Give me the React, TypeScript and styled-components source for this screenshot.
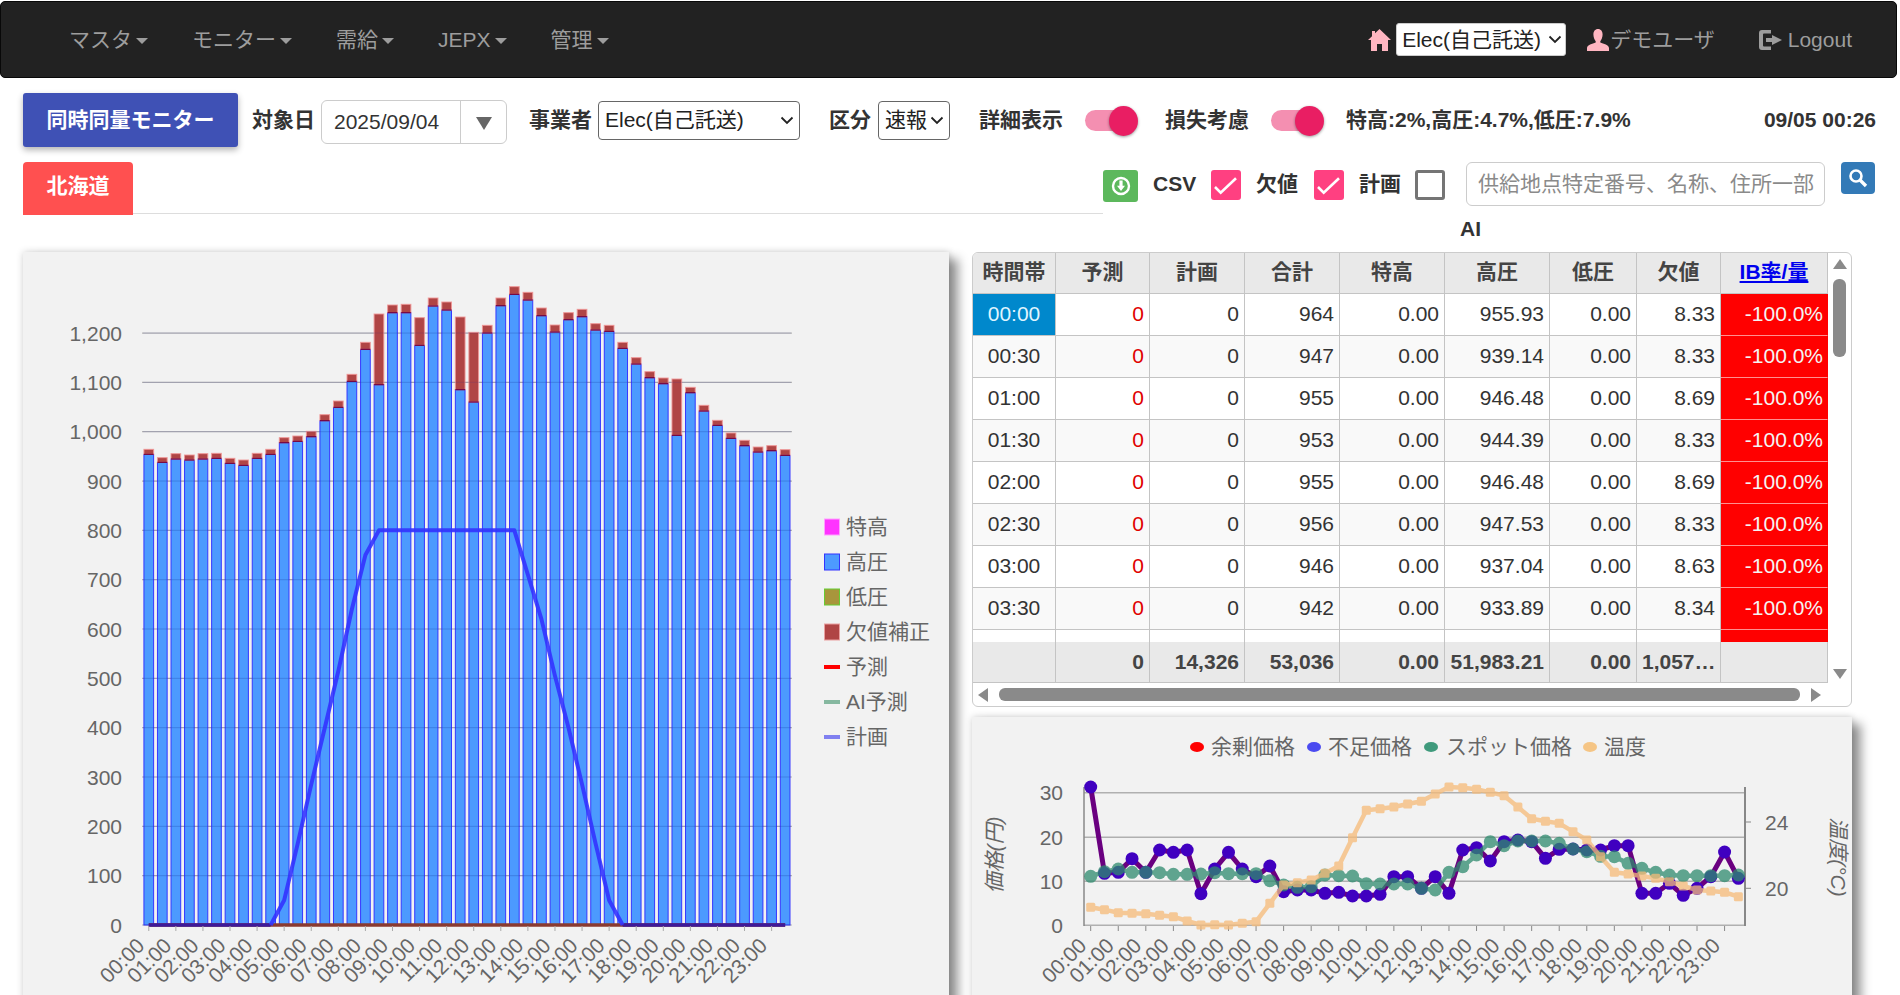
import styled, { createGlobalStyle } from 'styled-components';

const FONT = '"Liberation Sans", "Noto Sans CJK JP", sans-serif';

// bar tops traced from the day's data: [total top, 高圧 top], y px on a 3x grid from 240
const BARS: [number, number][] = [
  [628, 643], [653, 667], [641, 657], [645, 660], [641, 657], [640, 655], [655, 670], [660, 676],
  [640, 655], [628, 643], [593, 608], [588, 604], [574, 590], [524, 542], [483, 502], [403, 424],
  [307, 328], [222, 434], [195, 218], [193, 218], [233, 316], [174, 198], [186, 210], [231, 449],
  [277, 486], [256, 279], [174, 197], [140, 163], [157, 180], [204, 227], [255, 276], [218, 239],
  [208, 230], [251, 270], [256, 274], [307, 325], [353, 372], [395, 413], [414, 431], [417, 586],
  [442, 458], [496, 513], [541, 556], [579, 595], [601, 617], [621, 636], [617, 632], [629, 646],
];
const PLAN = [
  0, 0, 0, 0, 0, 0, 0, 0, 0, 0, 50, 165, 285, 400, 515, 640, 750, 800, 800, 800, 800, 800, 800, 800,
  800, 800, 800, 800, 710, 620, 505, 400, 285, 165, 50, 0, 0, 0, 0, 0, 0, 0, 0, 0, 0, 0, 0, 0,
];
const SURPLUS = [
  216, 475, 472, 431, 472, 405, 412, 405, 536, 462, 412, 462, 485, 453, 530, 525, 525, 535, 532, 543, 543, 538, 485, 485,
  520, 485, 535, 405, 398, 438, 380, 375, 380, 430, 403, 402, 405, 405, 392, 392, 535, 535, 505, 541, 520, 485, 411, 490,
];
const SPOT = [
  484, 470, 462, 472, 472, 473, 478, 478, 477, 473, 476, 476, 476, 497, 510, 517, 515, 480, 482, 483, 506, 507, 507, 507,
  520, 525, 472, 455, 420, 380, 392, 378, 378, 378, 385, 402, 410, 424, 425, 445, 460, 472, 480, 482, 482, 482, 482, 480,
];
const TEMP = [
  577, 584, 593, 595, 596, 601, 605, 618, 630, 629, 630, 625, 620, 565, 510, 503, 495, 475, 453, 368, 286, 281, 276, 267,
  259, 237, 216, 218, 223, 232, 242, 276, 311, 319, 325, 350, 375, 425, 472, 477, 483, 490, 500, 513, 525, 528, 532, 545,
];
const HOURS = Array.from({ length: 24 }, (_, h) => `${String(h).padStart(2, '0')}:00`);

const ROWS = [
  ['00:00', '0', '0', '964', '0.00', '955.93', '0.00', '8.33', '-100.0%'],
  ['00:30', '0', '0', '947', '0.00', '939.14', '0.00', '8.33', '-100.0%'],
  ['01:00', '0', '0', '955', '0.00', '946.48', '0.00', '8.69', '-100.0%'],
  ['01:30', '0', '0', '953', '0.00', '944.39', '0.00', '8.33', '-100.0%'],
  ['02:00', '0', '0', '955', '0.00', '946.48', '0.00', '8.69', '-100.0%'],
  ['02:30', '0', '0', '956', '0.00', '947.53', '0.00', '8.33', '-100.0%'],
  ['03:00', '0', '0', '946', '0.00', '937.04', '0.00', '8.63', '-100.0%'],
  ['03:30', '0', '0', '942', '0.00', '933.89', '0.00', '8.34', '-100.0%'],
  ['', '', '', '', '', '', '', '', ''],
];
const HEAD = ['時間帯', '予測', '計画', '合計', '特高', '高圧', '低圧', '欠値'];
const FOOT = ['', '0', '14,326', '53,036', '0.00', '51,983.21', '0.00', '1,057…', ''];

const barX = (i: number) => 142 + 13.54 * (i + 0.5);
const powerY = (v: number) => 925 - v * 0.4933;
const priceX = (i: number) => 1090.7 + 13.78 * i;
const priceY = (z: number) => 715 + z / 3;
const points = (ys: number[], x: (i: number) => number, y: (v: number) => number) =>
  ys.map((v, i) => `${x(i)},${y(v)}`).join(' ');

const CHEVRON = `url("data:image/svg+xml,%3Csvg xmlns='http://www.w3.org/2000/svg' width='14' height='9' viewBox='0 0 14 9'%3E%3Cpath d='M1.500 1.500 7 7l5.500-5.500' fill='none' stroke='%23222' stroke-width='1.800'/%3E%3C/svg%3E")`;

const GlobalStyle = createGlobalStyle`
  html, body {
    margin: 0;
    height: 995px;
    overflow: hidden;
    background: #fff;
    font-family: ${FONT};
    font-size: 21px;
    line-height: 24px;
    color: #333;
  }
  * { box-sizing: border-box; }
`;

const Page = styled.div`
  width: 1897px;
  padding-top: 1px;
`;

const Navbar = styled.nav`
  display: flex;
  align-items: center;
  height: 77px;
  padding: 0 44px 0 68px;
  background: #222;
  border: 1px solid #080808;
  border-radius: 5px;
`;
const NavMenu = styled.div`
  display: flex;
  gap: 44px;
`;
const NavItem = styled.a`
  display: flex;
  align-items: center;
  gap: 4px;
  color: #9d9d9d;
  &::after {
    content: '';
    border-top: 6px solid #9d9d9d;
    border-left: 6px solid transparent;
    border-right: 6px solid transparent;
    margin-top: 2px;
  }
`;
const NavRight = styled.div`
  display: flex;
  align-items: center;
  margin-left: auto;
`;
const NativeSelect = styled.select`
  appearance: none;
  background: #fff ${CHEVRON} no-repeat;
  color: #222;
  font: 21px/24px ${FONT};
`;
const NavSelect = styled(NativeSelect)`
  width: 170px;
  height: 33px;
  margin: 0 21px 0 5px;
  padding: 0 0 0 5px;
  border: 1px solid #ccc;
  border-radius: 3px;
  background-position: right 3px center;
`;
const NavLink = styled.a<{ $ml?: number }>`
  display: flex;
  align-items: center;
  gap: 1px;
  margin-left: ${(p) => p.$ml ?? 0}px;
  color: #9d9d9d;
`;
const LogoutLink = styled(NavLink)`
  gap: 5px;
`;

const Toolbar = styled.div`
  display: flex;
  align-items: center;
  height: 54px;
  margin-top: 15px;
  padding: 0 21px 0 23px;
`;
const MonitorButton = styled.button`
  width: 215px;
  height: 54px;
  padding: 0;
  border: 0;
  border-radius: 3px;
  background: #3f51b5;
  color: #fff;
  font: bold 21px/24px ${FONT};
  box-shadow: 0 3px 6px rgba(0, 0, 0, 0.3);
`;
const Field = styled.div<{ $ml: number; $gap?: number }>`
  display: flex;
  align-items: center;
  gap: ${(p) => p.$gap ?? 6}px;
  margin-left: ${(p) => p.$ml}px;
`;
const Label = styled.span`
  font-weight: bold;
  color: #333;
  white-space: nowrap;
`;
const DateBox = styled.div`
  display: flex;
  align-items: center;
  width: 186px;
  height: 44px;
  margin-top: 4px;
  border: 1px solid #ccc;
  border-radius: 6px;
  background: #fff;
`;
const DateInput = styled.input`
  width: 139px;
  height: 100%;
  padding: 0 0 0 12px;
  border: 0;
  border-right: 1px solid #ccc;
  background: transparent;
  color: #333;
  font: 21px/24px ${FONT};
`;
const DateArrow = styled.span`
  margin: 3px auto 0;
  border-top: 13px solid #666;
  border-left: 8px solid transparent;
  border-right: 8px solid transparent;
`;
const Select = styled(NativeSelect)<{ $w: number }>`
  width: ${(p) => p.$w}px;
  height: 39px;
  padding: 0 0 0 6px;
  border: 1px solid #666;
  border-radius: 4px;
  background-position: right 5px center;
`;
const Toggle = styled.span`
  position: relative;
  display: block;
  width: 50px;
  height: 21px;
  border-radius: 11px;
  background: #f48fb1;
  &::after {
    content: '';
    position: absolute;
    left: 24px;
    top: -4px;
    width: 29px;
    height: 30px;
    border-radius: 50%;
    background: #e91e63;
    box-shadow: 0 1px 3px rgba(0, 0, 0, 0.4);
  }
`;
const Clock = styled(Label)`
  margin-left: auto;
`;

const FilterRow = styled.div`
  display: flex;
  height: 53px;
  margin-top: 15px;
  padding-left: 23px;
`;
const TabStrip = styled.div`
  width: 1080px;
  height: 52px;
  border-bottom: 1px solid #ddd;
`;
const Tab = styled.div`
  display: flex;
  align-items: center;
  justify-content: center;
  width: 110px;
  height: 53px;
  padding-bottom: 5px;
  border-radius: 4px 4px 0 0;
  background: #ff5050;
  color: #fff;
  font-weight: bold;
`;
const Tools = styled.div`
  display: flex;
  align-items: flex-start;
  gap: 15px;
`;
const CsvButton = styled.button`
  display: flex;
  align-items: center;
  justify-content: center;
  width: 35px;
  height: 32px;
  margin-top: 8px;
  padding: 0;
  border: 0;
  border-radius: 3px;
  background: #5cb85c;
`;
const ToolLabel = styled(Label)<{ $w: number }>`
  width: ${(p) => p.$w}px;
  margin-top: 7px;
  line-height: 30px;
`;
const Check = styled.span<{ $on?: boolean }>`
  display: flex;
  width: 30px;
  height: 30px;
  margin-top: 8px;
  border-radius: 3px;
  background: ${(p) => (p.$on ? '#ff4081' : '#fff')};
  border: ${(p) => (p.$on ? '0' : '3px solid #757575')};
`;
const SearchInput = styled.input`
  width: 359px;
  height: 44px;
  margin-left: 6px;
  padding: 0 8px 0 11px;
  border: 1px solid #ccc;
  border-radius: 6px;
  color: #333;
  font: 21px/24px ${FONT};
  &::placeholder {
    color: #8a8a8a;
    opacity: 1;
  }
`;
const SearchButton = styled.button`
  display: flex;
  align-items: center;
  justify-content: center;
  width: 34px;
  height: 32px;
  margin-left: 1px;
  padding: 0;
  border: 0;
  border-radius: 4px;
  background: #337ab7;
`;
const AiRow = styled(Label)`
  display: block;
  height: 37px;
  padding: 2px 0 0 1460px;
`;

const Content = styled.div`
  display: flex;
  gap: 23px;
  padding-left: 23px;
`;
const ChartPanel = styled.section<{ $w: number; $h: number }>`
  width: ${(p) => p.$w}px;
  height: ${(p) => p.$h}px;
  flex: none;
  background: #f2f2f2;
  box-shadow: 0 0 7px rgba(0, 0, 0, 0.18), 9px 7px 10px rgba(0, 0, 0, 0.42);
`;
const ChartSvg = styled.svg`
  display: block;
  font-family: ${FONT};
  font-size: 21px;
  fill: #666;
`;
const RightColumn = styled.div`
  display: flex;
  flex-direction: column;
  gap: 10px;
  width: 880px;
`;

const TableCard = styled.div`
  height: 455px;
  background: #fff;
  border: 1px solid #ccc;
  border-radius: 6px;
  overflow: hidden;
`;
const TableMain = styled.div`
  display: flex;
`;
const TableBody = styled.div`
  width: 855px;
`;
const COLUMNS = '83px 94px 95px 95px 105px 105px 87px 84px 107px';
const GridRow = styled.div<{ $h: number; $alt?: boolean; $head?: boolean }>`
  display: grid;
  grid-template-columns: ${COLUMNS};
  height: ${(p) => p.$h}px;
  background: ${(p) => (p.$head ? '#e9e9e9' : p.$alt ? '#f9f9f9' : '#fff')};
`;
const RowWindow = styled.div`
  height: 348px;
  overflow: hidden;
`;
const Cell = styled.div<{ $kind?: 'time' | 'selected' | 'red' | 'ib' }>`
  display: flex;
  align-items: center;
  justify-content: ${(p) => (p.$kind === 'time' || p.$kind === 'selected' ? 'center' : 'flex-end')};
  padding: 0 ${(p) => (p.$kind === 'ib' ? 4 : 5)}px 2px 5px;
  border-right: 1px solid #c4c4c4;
  border-bottom: 1px solid #c4c4c4;
  color: ${(p) => (p.$kind === 'red' ? '#e00000' : p.$kind === 'selected' ? '#dff4ff' : p.$kind === 'ib' ? '#f4f4f4' : '#333')};
  background: ${(p) => (p.$kind === 'selected' ? '#0088cc' : p.$kind === 'ib' ? '#ff0000' : 'transparent')};
  ${(p) => (p.$kind === 'ib' ? 'border-bottom-color: #ff9090; border-right-color: #ff0000;' : '')}
`;
const HeadCell = styled.div`
  display: flex;
  align-items: center;
  justify-content: center;
  padding-bottom: 2px;
  border-right: 1px solid #c4c4c4;
  border-bottom: 1px solid #c4c4c4;
  font-weight: bold;
  color: #444;
`;
const IbLink = styled.a`
  color: #0000ee;
  text-decoration: underline;
`;
const FootCell = styled.div`
  padding: 0 5px;
  border-right: 1px solid #c4c4c4;
  border-bottom: 1px solid #c4c4c4;
  font-weight: bold;
  line-height: 40px;
  text-align: right;
  color: #444;
  white-space: nowrap;
`;
const VScroll = styled.div`
  display: flex;
  flex-direction: column;
  align-items: center;
  width: 23px;
  padding: 6px 0 4px;
`;
const ArrowUp = styled.span`
  border-bottom: 10px solid #8a8a8a;
  border-left: 7px solid transparent;
  border-right: 7px solid transparent;
`;
const ArrowDown = styled.span`
  margin-top: auto;
  border-top: 10px solid #8a8a8a;
  border-left: 7px solid transparent;
  border-right: 7px solid transparent;
`;
const VThumb = styled.span`
  width: 13px;
  height: 78px;
  margin-top: 10px;
  border-radius: 6px;
  background: #8a8a8a;
`;
const HScroll = styled.div`
  display: flex;
  align-items: center;
  height: 23px;
  padding: 0 30px 0 5px;
`;
const ArrowLeft = styled.span`
  border-right: 10px solid #8a8a8a;
  border-top: 7px solid transparent;
  border-bottom: 7px solid transparent;
`;
const ArrowRight = styled.span`
  border-left: 10px solid #8a8a8a;
  border-top: 7px solid transparent;
  border-bottom: 7px solid transparent;
`;
const HThumb = styled.span`
  flex: 1;
  height: 13px;
  margin: 0 11px;
  border-radius: 6px;
  background: #8a8a8a;
`;

function CheckMark() {
  return (
    <svg width={30} height={30} viewBox="0 0 30 30" fill="none">
      <path d="M4 17l5.700 5.700L25 8.300" stroke="#fff" strokeWidth={2.600} />
    </svg>
  );
}

function PowerChart() {
  const ticks = [1200, 1100, 1000, 900, 800, 700, 600, 500, 400, 300, 200, 100, 0];
  const legend = [
    { name: '特高', fill: '#ff33ff', stroke: '#ffa0ff' },
    { name: '高圧', fill: '#4d9aff', stroke: '#3333ff' },
    { name: '低圧', fill: '#a8963c', stroke: '#66cc33' },
    { name: '欠値補正', fill: '#b04545', stroke: '#eaa0a0' },
    { name: '予測', line: '#ff0000' },
    { name: 'AI予測', line: '#86b8a0' },
    { name: '計画', line: '#8080f0' },
  ];
  return (
    <ChartSvg width={926} height={743} viewBox="23 252 926 743">
      {ticks.map((t) => (
        <g key={t}>
          <line x1={142} x2={792} y1={powerY(t)} y2={powerY(t)} stroke="#b4b4b4" strokeWidth={1.2} />
          <text x={122} y={powerY(t) + 7.5} textAnchor="end">{t.toLocaleString('en-US')}</text>
        </g>
      ))}
      {BARS.map(([total, high], i) => (
        <g key={i}>
          <rect x={barX(i) - 4.85} width={9.7} y={240 + high / 3} height={925 - 240 - high / 3} fill="rgba(51,140,255,.87)" stroke="rgba(48,48,255,.95)" />
          <rect x={barX(i) - 4.85} width={9.7} y={240 + total / 3} height={(high - total) / 3} fill="#b04545" stroke="rgba(240,150,150,.9)" />
          <line x1={barX(i) - 4.85} x2={barX(i) + 4.85} y1={240 + high / 3} y2={240 + high / 3} stroke="#700040" strokeWidth={1.2} />
        </g>
      ))}
      {ticks.map((t) => (
        <line key={t} x1={143} x2={791} y1={powerY(t)} y2={powerY(t)} stroke="rgba(40,40,140,.15)" />
      ))}
      <line x1={barX(0)} x2={barX(47)} y1={925} y2={925} stroke="#8a3a30" strokeWidth={3.5} />
      <line x1={barX(0)} x2={barX(9)} y1={925} y2={925} stroke="#3e1a9a" strokeWidth={3.5} />
      <line x1={barX(35)} x2={barX(47)} y1={925} y2={925} stroke="#3e1a9a" strokeWidth={3.5} />
      <polyline points={points(PLAN.slice(9, 36), (i) => barX(i + 9), powerY)} fill="none" stroke="rgba(51,51,255,.9)" strokeWidth={4} strokeLinejoin="round" />
      {HOURS.map((h, k) => {
        const x = barX(k * 2);
        return (
          <g key={h}>
            <line x1={x} x2={x} y1={926} y2={931} stroke="#aaa" />
            <text x={x - 3} y={947} textAnchor="end" transform={`rotate(-45 ${x - 3} 947)`}>{h}</text>
          </g>
        );
      })}
      {legend.map((l, i) => {
        const cy = 527 + i * 35;
        return (
          <g key={l.name}>
            {l.line ? (
              <line x1={824} x2={840} y1={cy} y2={cy} stroke={l.line} strokeWidth={4} />
            ) : (
              <rect x={824.5} y={cy - 8} width={15} height={16} fill={l.fill} stroke={l.stroke} />
            )}
            <text x={846} y={cy + 6.5}>{l.name}</text>
          </g>
        );
      })}
    </ChartSvg>
  );
}

function PriceChart() {
  const legend = [
    { name: '余剰価格', x: 1190, fill: '#ff0000', tx: 1211 },
    { name: '不足価格', x: 1307, fill: '#4a4af0', tx: 1328 },
    { name: 'スポット価格', x: 1424, fill: '#3f9a7c', tx: 1446 },
    { name: '温度', x: 1583, fill: '#f5c585', tx: 1604 },
  ];
  return (
    <ChartSvg width={880} height={278} viewBox="972 717 880 278">
      {legend.map((l) => (
        <g key={l.name}>
          <ellipse cx={l.x + 7} cy={747} rx={7} ry={5} fill={l.fill} />
          <text x={l.tx} y={753.5}>{l.name}</text>
        </g>
      ))}
      {[[30, 792.7], [20, 837.3], [10, 881.3], [0, 925.3]].map(([t, y]) => (
        <g key={t}>
          <line x1={1084} x2={1745} y1={y} y2={y} stroke="#b0b0b0" strokeWidth={1.4} />
          <text x={1063} y={y + 7.5} textAnchor="end">{t}</text>
        </g>
      ))}
      <line x1={1084} x2={1084} y1={787} y2={926} stroke="#888" strokeWidth={1.5} />
      <line x1={1745} x2={1745} y1={787} y2={926} stroke="#888" strokeWidth={2} />
      {[[24, 822], [20, 888.3]].map(([t, y]) => (
        <g key={t}>
          <line x1={1745} x2={1751} y1={y} y2={y} stroke="#888" />
          <text x={1765} y={y + 7.5}>{t}</text>
        </g>
      ))}
      <text transform="translate(1002 855) rotate(-90)" textAnchor="middle" fontStyle="italic">価格(円)</text>
      <text transform="translate(1831 857) rotate(90)" textAnchor="middle" fontStyle="italic">温度(°C)</text>
      {HOURS.map((h, k) => {
        const x = priceX(k * 2);
        return (
          <g key={h}>
            <line x1={x} x2={x} y1={926} y2={931} stroke="#888" />
            <text x={x - 3} y={947} textAnchor="end" transform={`rotate(-45 ${x - 3} 947)`}>{h}</text>
          </g>
        );
      })}
      <polyline points={points(SURPLUS, priceX, priceY)} fill="none" stroke="#6a0080" strokeWidth={5} strokeLinejoin="round" />
      {SURPLUS.map((z, i) => <circle key={i} cx={priceX(i)} cy={priceY(z)} r={6.5} fill="#4000c0" />)}
      <g opacity={0.75}>
        <polyline points={points(SPOT, priceX, priceY)} fill="none" stroke="#2e8b6e" strokeWidth={4.5} />
        {SPOT.map((z, i) => <circle key={i} cx={priceX(i)} cy={priceY(z)} r={6.5} fill="#2e8b6e" />)}
      </g>
      <g opacity={0.75}>
        <polyline points={points(TEMP, priceX, priceY)} fill="none" stroke="#f6bb78" strokeWidth={4.5} />
        {TEMP.map((z, i) => <rect key={i} x={priceX(i) - 4.5} y={priceY(z) - 4.5} width={9} height={9} rx={1.5} fill="#f6bb78" />)}
      </g>
    </ChartSvg>
  );
}

export default function App() {
  return (
    <Page>
      <GlobalStyle />
      <Navbar>
        <NavMenu>
          {['マスタ', 'モニター', '需給', 'JEPX', '管理'].map((m) => <NavItem key={m}>{m}</NavItem>)}
        </NavMenu>
        <NavRight>
          <svg width={23} height={22} viewBox="0 0 23 22" fill="#ffb6c1">
            <path d="M11.5 0 23 11h-3v11h-6v-7H9v7H3V11H0L4 7.2V2h3v2.3z" />
          </svg>
          <NavSelect defaultValue="Elec(自己託送)"><option>Elec(自己託送)</option></NavSelect>
          <NavLink>
            <svg width={22} height={22} viewBox="0 0 22 22" fill="#ffb6c1">
              <path d="M11 0c3 0 4.600 2.400 4.600 5.600 0 3-1.200 5.300-2.300 6.600v1.300c3.200 1 8.700 2.700 8.700 5.500V22H0v-3c0-2.800 5.500-4.500 8.700-5.500v-1.300C7.600 10.900 6.400 8.600 6.400 5.600 6.400 2.400 8 0 11 0z" />
            </svg>
            デモユーザ
          </NavLink>
          <LogoutLink $ml={44}>
            <svg width={24} height={22} viewBox="0 0 24 22" fill="#9d9d9d">
              <path d="M3 1h9v3.500H5a1 1 0 0 0-1 1v11a1 1 0 0 0 1 1h7V21H3a3 3 0 0 1-3-3V4a3 3 0 0 1 3-3z" />
              <path d="M13 6v3H7v4h6v3l10-5z" />
            </svg>
            Logout
          </LogoutLink>
        </NavRight>
      </Navbar>

      <Toolbar>
        <MonitorButton>同時同量モニター</MonitorButton>
        <Field $ml={14}>
          <Label>対象日</Label>
          <DateBox>
            <DateInput readOnly value="2025/09/04" />
            <DateArrow />
          </DateBox>
        </Field>
        <Field $ml={22}>
          <Label>事業者</Label>
          <Select $w={202} defaultValue="Elec(自己託送)"><option>Elec(自己託送)</option></Select>
        </Field>
        <Field $ml={29} $gap={7}>
          <Label>区分</Label>
          <Select $w={72} defaultValue="速報"><option>速報</option></Select>
        </Field>
        <Field $ml={29} $gap={22}>
          <Label>詳細表示</Label>
          <Toggle />
        </Field>
        <Field $ml={30} $gap={22}>
          <Label>損失考慮</Label>
          <Toggle />
        </Field>
        <Field $ml={25}>
          <Label>特高:2%,高圧:4.7%,低圧:7.9%</Label>
        </Field>
        <Clock>09/05 00:26</Clock>
      </Toolbar>

      <FilterRow>
        <TabStrip><Tab>北海道</Tab></TabStrip>
        <Tools>
          <CsvButton aria-label="CSV">
            <svg width={20} height={20} viewBox="0 0 20 20" fill="none">
              <circle cx={10} cy={10} r={8} stroke="#fff" strokeWidth={2.4} />
              <path d="M8.400 4.500h3.200v5.200h2.400L10 15 6 9.700h2.400z" fill="#fff" />
            </svg>
          </CsvButton>
          <ToolLabel $w={43}>CSV</ToolLabel>
          <Check $on><CheckMark /></Check>
          <ToolLabel $w={43}>欠値</ToolLabel>
          <Check $on><CheckMark /></Check>
          <ToolLabel $w={41}>計画</ToolLabel>
          <Check />
          <SearchInput placeholder="供給地点特定番号、名称、住所一部" />
          <SearchButton aria-label="検索">
            <svg width={20} height={20} viewBox="0 0 20 20" fill="none" stroke="#fff">
              <circle cx={8} cy={8} r={5.500} strokeWidth={2.600} />
              <path d="M12 12l6 6" strokeWidth={3.400} />
            </svg>
          </SearchButton>
        </Tools>
      </FilterRow>
      <AiRow>AI</AiRow>

      <Content>
        <ChartPanel $w={926} $h={800}>
          <PowerChart />
        </ChartPanel>
        <RightColumn>
          <TableCard>
            <TableMain>
              <TableBody>
                <GridRow $h={41} $head>
                  {HEAD.map((h) => <HeadCell key={h}>{h}</HeadCell>)}
                  <HeadCell><IbLink>IB率/量</IbLink></HeadCell>
                </GridRow>
                <RowWindow>
                  {ROWS.map((row, r) => (
                    <GridRow key={r} $h={42} $alt={r % 2 === 1}>
                      {row.map((v, c) => (
                        <Cell
                          key={c}
                          $kind={c === 0 ? (r === 0 ? 'selected' : 'time') : c === 1 ? 'red' : c === 8 ? 'ib' : undefined}
                        >
                          {v}
                        </Cell>
                      ))}
                    </GridRow>
                  ))}
                </RowWindow>
                <GridRow $h={41} $head>
                  {FOOT.map((v, c) => <FootCell key={c}>{v}</FootCell>)}
                </GridRow>
              </TableBody>
              <VScroll>
                <ArrowUp />
                <VThumb />
                <ArrowDown />
              </VScroll>
            </TableMain>
            <HScroll>
              <ArrowLeft />
              <HThumb />
              <ArrowRight />
            </HScroll>
          </TableCard>
          <ChartPanel $w={880} $h={400}>
            <PriceChart />
          </ChartPanel>
        </RightColumn>
      </Content>
    </Page>
  );
}
